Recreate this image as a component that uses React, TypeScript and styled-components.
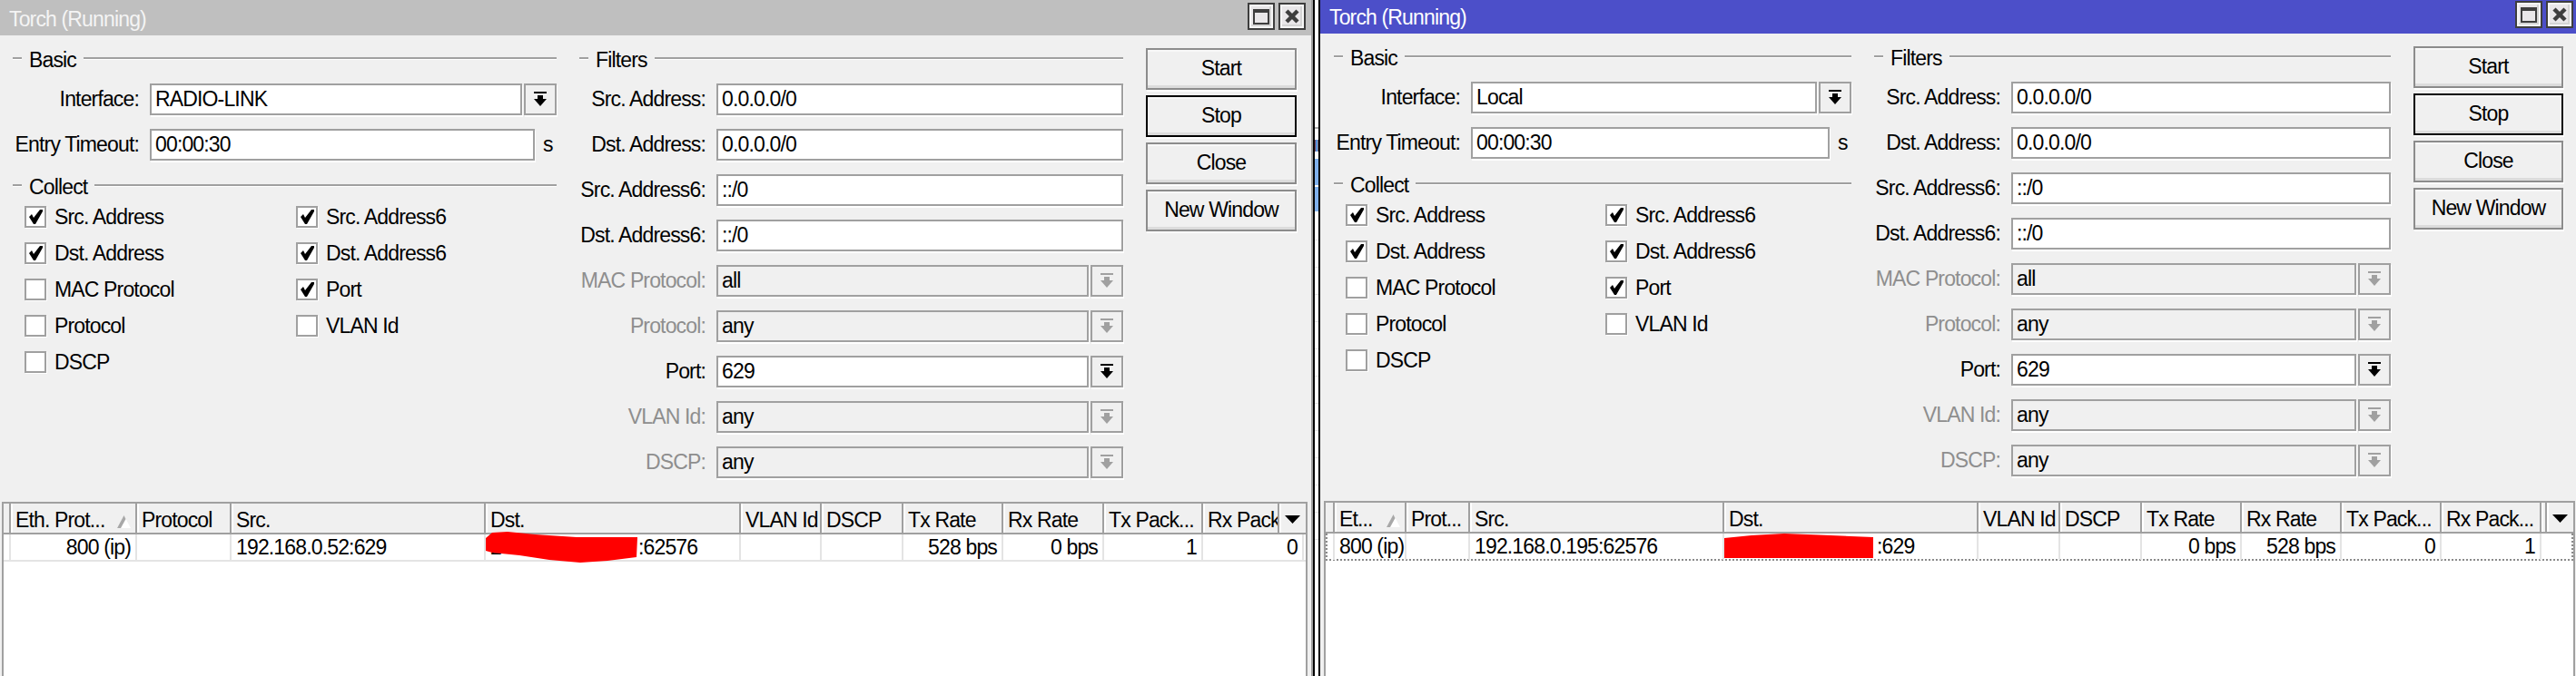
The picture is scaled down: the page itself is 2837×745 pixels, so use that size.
import styled, { createGlobalStyle } from "styled-components";

const GlobalStyle = createGlobalStyle`
  html, body {
    margin: 0;
    padding: 0;
    background: #ffffff;
    overflow: hidden;
  }
  body {
    font-family: "Liberation Sans", Arial, sans-serif;
    font-size: 23px;
    letter-spacing: -0.85px;
    color: #000000;
  }
`;

const Page = styled.div`
  display: flex;
  width: 2837px;
  height: 745px;
  overflow: hidden;
`;

const Win = styled.section<{ $w: number; $edge: boolean }>`
  flex: none;
  width: ${(p) => p.$w}px;
  height: 745px;
  box-sizing: border-box;
  display: flex;
  flex-direction: column;
  background: #f0f0f0;
  border-right: ${(p) => (p.$edge ? "2px solid #a0a0a0" : "none")};
`;

/* the sliver of desktop showing between the two windows */
const Strip = styled.div`
  flex: none;
  box-sizing: border-box;
  width: 8px;
  height: 745px;
  border-left: 2px solid #000000;
  border-right: 2px solid #000000;
  background-color: #ffffff;
  background-image:
    linear-gradient(#a8a8a8, #a8a8a8),
    linear-gradient(to right, #c2452d, #2a6fd0, #8cc4ee, #4a1830),
    linear-gradient(#ffffff, #ffffff),
    linear-gradient(#7fb0ec, #7fb0ec),
    repeating-linear-gradient(to bottom, #e2e2e2 0, #e2e2e2 1px, transparent 1px, transparent 30px);
  background-repeat: no-repeat;
  background-size: 100% 2px, 100% 13px, 100% 2px, 100% 58px, 100% 360px;
  background-position: 0 140px, 0 154px, 0 204px, 0 175px, 0 264px;
`;

const TitleBar = styled.header<{ $bg: string; $h: number; $top: number; $right: number; $color: string }>`
  flex: none;
  height: ${(p) => p.$h}px;
  box-sizing: border-box;
  display: flex;
  align-items: flex-start;
  justify-content: space-between;
  padding: ${(p) => p.$top}px ${(p) => p.$right}px 0 10px;
  background: ${(p) => p.$bg};
  color: ${(p) => p.$color};
`;

const TitleText = styled.div<{ $h: number; $top: number }>`
  line-height: ${(p) => p.$h - p.$top}px;
`;

const TitleButtons = styled.div`
  display: flex;
  gap: 4px;
`;

const TitleButton = styled.div`
  width: 30px;
  height: 30px;
  box-sizing: border-box;
  display: flex;
  align-items: center;
  justify-content: center;
  border: 2px solid #3e3e3e;
  box-shadow: inset 0 0 0 2px #f6f6f6, inset -2px -2px 0 2px #d4d4d4;
  background: #e9e7e9;
  color: #3e3e3e;
`;

const Body = styled.div<{ $h: number; $pad: number; $gap: number }>`
  flex: none;
  height: ${(p) => p.$h}px;
  box-sizing: border-box;
  display: flex;
  gap: ${(p) => p.$gap}px;
  padding: 14px 0 0 ${(p) => p.$pad}px;
`;

const Column = styled.div<{ $w: number }>`
  flex: none;
  width: ${(p) => p.$w}px;
  display: flex;
  flex-direction: column;
`;

const GroupHead = styled.div<{ $top?: number }>`
  height: 24px;
  box-sizing: border-box;
  padding-top: 2px;
  display: flex;
  align-items: center;
  gap: 8px;
  margin-top: ${(p) => p.$top ?? 0}px;
  line-height: 22px;
  &::before,
  &::after {
    content: "";
    height: 2px;
    background: #a0a0a0;
    box-shadow: 0 1px 0 #ffffff;
    margin-bottom: 4px;
  }
  &::before {
    flex: none;
    width: 10px;
  }
  &::after {
    flex: 1;
  }
`;

const Rows = styled.div`
  display: flex;
  flex-direction: column;
  gap: 15px;
  margin-top: 15px;
`;

const Row = styled.div`
  height: 35px;
  display: grid;
  grid-template-columns: 139px 1fr;
  column-gap: 12px;
  align-items: center;
`;

const Label = styled.div<{ $off?: boolean }>`
  text-align: right;
  white-space: nowrap;
  color: ${(p) => (p.$off ? "#8e8e8e" : "#000000")};
`;

const Control = styled.div`
  display: flex;
  height: 35px;
`;

const Field = styled.div<{ $off?: boolean }>`
  flex: 1;
  min-width: 0;
  box-sizing: border-box;
  height: 35px;
  padding: 0 4px;
  line-height: 31px;
  border: 2px solid #a0a0a0;
  background: ${(p) => (p.$off ? "#f0f0f0" : "#ffffff")};
  box-shadow: 1px 2px 0 #ffffff;
  white-space: nowrap;
`;

const DropButton = styled.div<{ $off?: boolean }>`
  flex: none;
  width: 36px;
  height: 35px;
  margin-left: 2px;
  box-sizing: border-box;
  display: flex;
  align-items: center;
  justify-content: center;
  border: 2px solid #a0a0a0;
  box-shadow: 1px 2px 0 #ffffff;
  background: #f0f0f0;
  color: ${(p) => (p.$off ? "#a0a0a0" : "#000000")};
`;

const Unit = styled.div`
  flex: none;
  width: 24px;
  padding-left: 9px;
  box-sizing: border-box;
  line-height: 35px;
`;

const CheckGrid = styled.div<{ $col: number }>`
  display: grid;
  grid-template-columns: ${(p) => p.$col}px 1fr;
  row-gap: 16px;
  margin: 10px 0 0 13px;
`;

const CheckItem = styled.div`
  display: flex;
  align-items: center;
  gap: 9px;
  height: 24px;
  white-space: nowrap;
`;

const CheckText = styled.span`
  line-height: 28px;
`;

const Box = styled.div`
  flex: none;
  width: 24px;
  height: 24px;
  box-sizing: border-box;
  display: flex;
  align-items: center;
  justify-content: center;
  border: 2px solid #a0a0a0;
  background: #ffffff;
  box-shadow: 1px 1px 0 #ffffff;
`;

const ButtonColumn = styled.div<{ $w: number }>`
  flex: none;
  width: ${(p) => p.$w}px;
  display: flex;
  flex-direction: column;
  gap: 6px;
`;

const ActionButton = styled.div<{ $focus?: boolean }>`
  height: 46px;
  box-sizing: border-box;
  display: flex;
  align-items: center;
  justify-content: center;
  padding-bottom: 2px;
  background: #f0f0f0;
  border: 2px solid ${(p) => (p.$focus ? "#000000" : "#8c8c8c")};
  box-shadow: inset 0 -3px 0 #dcdcdc, inset 0 2px 0 #f8f8f8, 1px 2px 0 #ffffff;
`;

const Table = styled.div<{ $ml: number; $mr: number }>`
  flex: 1;
  margin: 0 ${(p) => p.$mr}px 0 ${(p) => p.$ml}px;
  border: 2px solid #a0a0a0;
  border-bottom: none;
  background: #ffffff;
`;

const HeadRow = styled.div<{ $cols: string }>`
  display: grid;
  grid-template-columns: ${(p) => p.$cols};
  height: 32px;
  background: #f0f0f0;
  border-bottom: 2px solid #a0a0a0;
`;

const HeadCell = styled.div<{ $first?: boolean }>`
  position: relative;
  box-sizing: border-box;
  padding-left: ${(p) => (p.$first ? 0 : 5)}px;
  border-left: ${(p) => (p.$first ? "none" : "2px solid #a0a0a0")};
  box-shadow: ${(p) => (p.$first ? "none" : "inset 2px 0 0 #ffffff")};
  line-height: 37px;
  white-space: nowrap;
  overflow: hidden;
`;

const SortMark = styled.svg`
  position: absolute;
  right: 5px;
  top: 13px;
`;

const MenuMark = styled.svg`
  margin: 13px 0 0 1px;
  display: block;
`;

const DataRow = styled.div<{ $cols: string; $focus?: boolean }>`
  display: grid;
  grid-template-columns: ${(p) => p.$cols};
  height: 30px;
  box-sizing: border-box;
  border-bottom: 2px ${(p) => (p.$focus ? "dotted #8a8a8a" : "solid #e4e4e4")};
  border-left: ${(p) => (p.$focus ? "2px dotted #8a8a8a" : "none")};
  border-right: ${(p) => (p.$focus ? "2px dotted #8a8a8a" : "none")};
`;

const DataCell = styled.div<{ $right?: boolean; $first?: boolean }>`
  position: relative;
  box-sizing: border-box;
  padding: 0 5px;
  border-left: ${(p) => (p.$first ? "none" : "2px solid #e4e4e4")};
  text-align: ${(p) => (p.$right ? "right" : "left")};
  line-height: 29px;
  white-space: nowrap;
`;

const Masked = styled.span<{ $w: number }>`
  display: inline-block;
  width: ${(p) => p.$w}px;
`;

const Scribble = styled.svg<{ $top: number }>`
  position: absolute;
  left: 0;
  top: ${(p) => p.$top}px;
`;

function DropIcon() {
  return (
    <svg width="14" height="17" viewBox="0 0 14 17" fill="currentColor">
      <rect x="0" y="0" width="14" height="2" />
      <rect x="4" y="4" width="6" height="5" />
      <polygon points="0,8 14,8 7,16" />
    </svg>
  );
}

function CheckIcon() {
  return (
    <svg width="15" height="16" viewBox="0 0 15 16" fill="#000000">
      <polygon points="0,8 3,5 5,9 12,0 15,0 15,2 7,16 5,16" />
    </svg>
  );
}

function MaxIcon() {
  return (
    <svg width="18" height="18" viewBox="0 0 18 18" fill="none" stroke="currentColor">
      <rect x="1" y="2" width="16" height="15" strokeWidth="2" />
      <rect x="1" y="1" width="16" height="4" fill="currentColor" stroke="none" />
    </svg>
  );
}

function CloseIcon() {
  return (
    <svg width="16" height="16" viewBox="0 0 16 16" stroke="currentColor" strokeWidth="4.5">
      <line x1="2" y1="2" x2="14" y2="14" />
      <line x1="14" y1="2" x2="2" y2="14" />
    </svg>
  );
}

function Combo({ value, off }: { value: string; off?: boolean }) {
  return (
    <Control>
      <Field $off={off}>{value}</Field>
      <DropButton $off={off}>
        <DropIcon />
      </DropButton>
    </Control>
  );
}

function Check({ label, on }: { label: string; on?: boolean }) {
  return (
    <CheckItem>
      <Box>{on && <CheckIcon />}</Box>
      <CheckText>{label}</CheckText>
    </CheckItem>
  );
}

interface ITorch {
  width: number;
  edge: boolean;
  titleBg: string;
  titleColor: string;
  titleH: number;
  titleTop: number;
  titleRight: number;
  bodyH: number;
  pad: number;
  gap: number;
  basicW: number;
  filterW: number;
  buttonW: number;
  checkCol: number;
  iface: string;
  tableL: number;
  tableR: number;
  headCols: string;
  rowCols: string;
  headers: string[];
  cells: string[];
  focus: boolean;
  maskW: number;
  dstEnd: string;
  scribble: string;
  scribbleW: number;
  scribbleH: number;
  scribbleTop: number;
}

const leftWindow: ITorch = {
  width: 1446,
  edge: true,
  titleBg: "#bfbfbf",
  titleColor: "#f4f4f4",
  titleH: 39,
  titleTop: 3,
  titleRight: 6,
  bodyH: 514,
  pad: 14,
  gap: 25,
  basicW: 599,
  filterW: 599,
  buttonW: 166,
  checkCol: 299,
  iface: "RADIO-LINK",
  tableL: 2,
  tableR: 4,
  headCols: "6px 139px 104px 280px 281px 89px 90px 110px 111px 109px 84px 31px",
  rowCols: "6px 139px 104px 280px 281px 89px 90px 110px 111px 109px 111px 4px",
  headers: ["", "Eth. Prot...", "Protocol", "Src.", "Dst.", "VLAN Id", "DSCP", "Tx Rate", "Rx Rate", "Tx Pack...", "Rx Pack"],
  cells: ["", "800 (ip)", "", "192.168.0.52:629", "", "", "", "528 bps", "0 bps", "1", "0", ""],
  focus: false,
  maskW: 163,
  dstEnd: ":62576",
  scribble: "0,8 7,2 24,1 54,4 100,7 167,7 166,29 134,33 104,35 70,32 37,27 7,24 0,22",
  scribbleW: 168,
  scribbleH: 36,
  scribbleTop: -4,
};

const rightWindow: ITorch = {
  width: 1383,
  edge: false,
  titleBg: "#4c4fc9",
  titleColor: "#ffffff",
  titleH: 37,
  titleTop: 1,
  titleRight: 3,
  bodyH: 515,
  pad: 15,
  gap: 25,
  basicW: 570,
  filterW: 569,
  buttonW: 165,
  checkCol: 286,
  iface: "Local",
  tableL: 4,
  tableR: 1,
  headCols: "8px 79px 70px 280px 280px 90px 90px 110px 110px 110px 110px 6px 31px",
  rowCols: "6px 79px 70px 280px 280px 90px 90px 110px 110px 110px 110px 35px",
  headers: ["", "Et...", "Prot...", "Src.", "Dst.", "VLAN Id", "DSCP", "Tx Rate", "Rx Rate", "Tx Pack...", "Rx Pack...", ""],
  cells: ["", "800 (ip)", "", "192.168.0.195:62576", "", "", "", "0 bps", "528 bps", "0", "1", ""],
  focus: true,
  maskW: 163,
  dstEnd: ":629",
  scribble: "0,5 30,2 66,0 117,2 164,4 164,27 0,27",
  scribbleW: 165,
  scribbleH: 28,
  scribbleTop: 0,
};

const filters = [
  { label: "Src. Address:", value: "0.0.0.0/0" },
  { label: "Dst. Address:", value: "0.0.0.0/0" },
  { label: "Src. Address6:", value: "::/0" },
  { label: "Dst. Address6:", value: "::/0" },
];

const combos = [
  { label: "MAC Protocol:", value: "all", off: true },
  { label: "Protocol:", value: "any", off: true },
  { label: "Port:", value: "629", off: false },
  { label: "VLAN Id:", value: "any", off: true },
  { label: "DSCP:", value: "any", off: true },
];

const rightAligned = [1, 7, 8, 9, 10];

function TorchWindow({ cfg }: { cfg: ITorch }) {
  return (
    <Win $w={cfg.width} $edge={cfg.edge}>
      <TitleBar $bg={cfg.titleBg} $color={cfg.titleColor} $h={cfg.titleH} $top={cfg.titleTop} $right={cfg.titleRight}>
        <TitleText $h={cfg.titleH} $top={cfg.titleTop}>
          Torch (Running)
        </TitleText>
        <TitleButtons>
          <TitleButton>
            <MaxIcon />
          </TitleButton>
          <TitleButton>
            <CloseIcon />
          </TitleButton>
        </TitleButtons>
      </TitleBar>

      <Body $h={cfg.bodyH} $pad={cfg.pad} $gap={cfg.gap}>
        <Column $w={cfg.basicW}>
          <GroupHead>Basic</GroupHead>
          <Rows>
            <Row>
              <Label>Interface:</Label>
              <Combo value={cfg.iface} />
            </Row>
            <Row>
              <Label>Entry Timeout:</Label>
              <Control>
                <Field>00:00:30</Field>
                <Unit>s</Unit>
              </Control>
            </Row>
          </Rows>
          <GroupHead $top={16}>Collect</GroupHead>
          <CheckGrid $col={cfg.checkCol}>
            <Check label="Src. Address" on />
            <Check label="Src. Address6" on />
            <Check label="Dst. Address" on />
            <Check label="Dst. Address6" on />
            <Check label="MAC Protocol" />
            <Check label="Port" on />
            <Check label="Protocol" />
            <Check label="VLAN Id" />
            <Check label="DSCP" />
          </CheckGrid>
        </Column>

        <Column $w={cfg.filterW}>
          <GroupHead>Filters</GroupHead>
          <Rows>
            {filters.map((f) => (
              <Row key={f.label}>
                <Label>{f.label}</Label>
                <Control>
                  <Field>{f.value}</Field>
                </Control>
              </Row>
            ))}
            {combos.map((c) => (
              <Row key={c.label}>
                <Label $off={c.off}>{c.label}</Label>
                <Combo value={c.value} off={c.off} />
              </Row>
            ))}
          </Rows>
        </Column>

        <ButtonColumn $w={cfg.buttonW}>
          <ActionButton>Start</ActionButton>
          <ActionButton $focus>Stop</ActionButton>
          <ActionButton>Close</ActionButton>
          <ActionButton>New Window</ActionButton>
        </ButtonColumn>
      </Body>

      <Table $ml={cfg.tableL} $mr={cfg.tableR}>
        <HeadRow $cols={cfg.headCols}>
          {cfg.headers.map((h, i) => (
            <HeadCell key={i} $first={i === 0}>
              {h}
              {i === 1 && (
                <SortMark width="15" height="14" viewBox="0 0 15 14">
                  <polygon points="7.5,0 15,14 0,14" fill="#ffffff" />
                  <polygon points="7.5,0 9.5,4 4,14 0,14" fill="#a8a8a8" />
                </SortMark>
              )}
            </HeadCell>
          ))}
          <HeadCell>
            <MenuMark width="17" height="9" viewBox="0 0 17 9">
              <polygon points="0,0 17,0 8.5,9" fill="#000000" />
            </MenuMark>
          </HeadCell>
        </HeadRow>
        <DataRow $cols={cfg.rowCols} $focus={cfg.focus}>
          {cfg.cells.map((c, i) => (
            <DataCell key={i} $first={i === 0} $right={rightAligned.includes(i)}>
              {i === 4 ? (
                <>
                  <Masked $w={cfg.maskW}>2</Masked>
                  {cfg.dstEnd}
                  <Scribble $top={cfg.scribbleTop} width={cfg.scribbleW} height={cfg.scribbleH} viewBox={`0 0 ${cfg.scribbleW} ${cfg.scribbleH}`}>
                    <polygon points={cfg.scribble} fill="#ff0000" />
                  </Scribble>
                </>
              ) : (
                c
              )}
            </DataCell>
          ))}
        </DataRow>
      </Table>
    </Win>
  );
}

export default function App() {
  return (
    <>
      <GlobalStyle />
      <Page>
        <TorchWindow cfg={leftWindow} />
        <Strip />
        <TorchWindow cfg={rightWindow} />
      </Page>
    </>
  );
}
